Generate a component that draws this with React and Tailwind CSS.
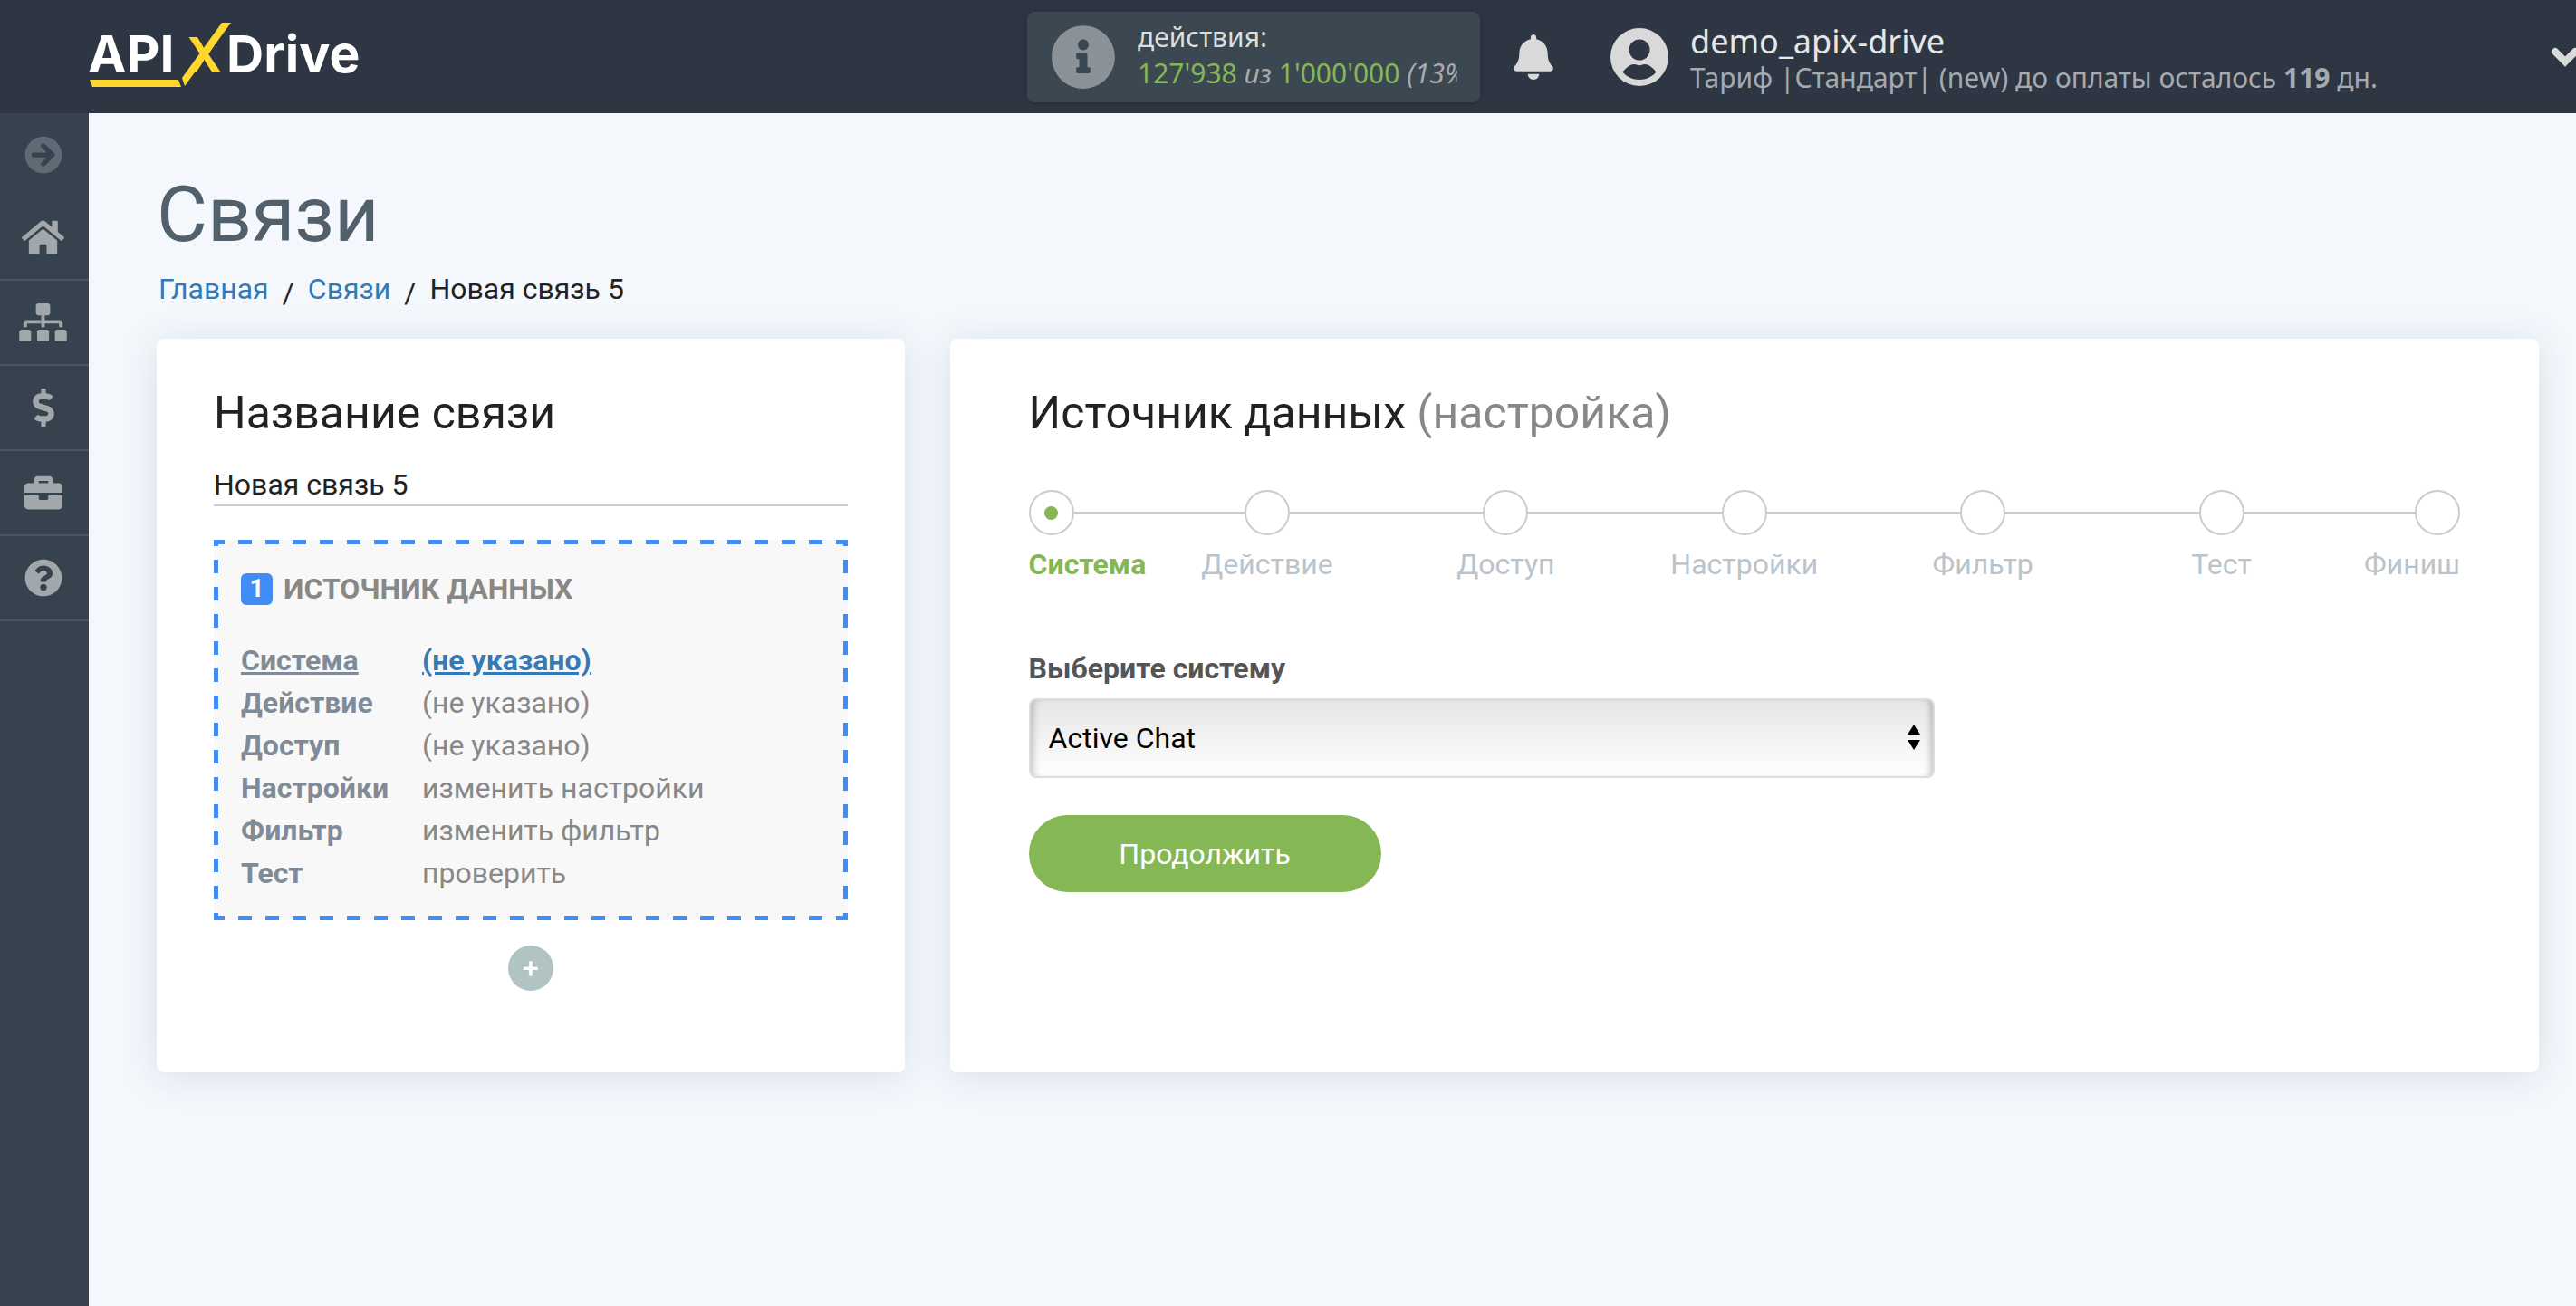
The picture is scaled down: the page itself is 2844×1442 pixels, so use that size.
import {
  FaArrowCircleRight,
  FaBell,
  FaBriefcase,
  FaDollarSign,
  FaHome,
  FaInfoCircle,
  FaQuestionCircle,
  FaSitemap,
} from 'react-icons/fa'

const NAV_ITEMS = [
  { label: 'Главная', icon: FaHome, size: 'h-[42px] w-[47px]' },
  { label: 'Связи', icon: FaSitemap, size: 'h-[42px] w-[53px]' },
  { label: 'Оплата', icon: FaDollarSign, size: 'size-[42px]' },
  { label: 'Проекты', icon: FaBriefcase, size: 'size-[42px]' },
  { label: 'Помощь', icon: FaQuestionCircle, size: 'size-[42px]' },
]

const SOURCE_ROWS = [
  { label: 'Система', value: '(не указано)', active: true },
  { label: 'Действие', value: '(не указано)' },
  { label: 'Доступ', value: '(не указано)' },
  { label: 'Настройки', value: 'изменить настройки' },
  { label: 'Фильтр', value: 'изменить фильтр' },
  { label: 'Тест', value: 'проверить' },
]

const STEPS = ['Система', 'Действие', 'Доступ', 'Настройки', 'Фильтр', 'Тест', 'Финиш']

export default function App() {
  return (
    <div className="flex min-h-screen flex-col bg-[#f4f8fd] font-[Roboto,sans-serif] text-[32px] leading-[48px] text-[#222]">
      <Header />
      <div className="flex flex-1">
        <Sidebar />
        <main className="min-w-0 flex-1 pt-16 pr-[41px] pl-[75px]">
          <h1 className="text-[86px] leading-[96px] text-[#51606b]">Связи</h1>
          <Breadcrumbs />
          <div className="mt-[27px] grid grid-cols-[8fr_17fr] gap-[50px]">
            <ConnectionCard />
            <SourceCard />
          </div>
        </main>
      </div>
    </div>
  )
}

function Header() {
  return (
    <header className="flex h-[125px] items-center overflow-hidden bg-[#2d3642] font-['Noto_Sans',sans-serif] text-[30px]">
      <a href="#" aria-label="ApiX-Drive" className="ml-[98px] shrink-0">
        <Logo />
      </a>

      <div className="ml-auto flex h-[100px] w-[500px] shrink-0 items-center rounded-lg bg-[#3b4851] pr-[25px] pl-[26px] shadow-[0_0_6px_rgba(0,0,0,0.2)]">
        <FaInfoCircle className="size-[72px] shrink-0 text-[#8a9197]" />
        <div className="ml-6 overflow-hidden pb-1 leading-10 whitespace-nowrap">
          <p className="text-[#ddd]">действия:</p>
          <p className="text-[#85b755]">
            127'938 <i className="text-[#aaa]">из</i> 1'000'000 <i className="text-[#aaa]">(13%)</i>
          </p>
        </div>
      </div>

      <button type="button" aria-label="Уведомления" className="ml-[34px] shrink-0">
        <FaBell className="size-[50px] text-[#d9d9d9]" />
      </button>

      <UserIcon />
      <div className="ml-6 w-[950px] shrink-0 pt-1.5 whitespace-nowrap">
        <p className="text-[36px] leading-10 text-[#e6e6e6]">demo_apix-drive</p>
        <p className="leading-10 text-[#a5aaaf]">
          Тариф |Стандарт| (new) до оплаты осталось <b>119</b> дн.
        </p>
      </div>
      <button type="button" aria-label="Меню" className="-mr-1 shrink-0">
        <svg viewBox="0 0 32 22" className="h-[22px] w-8" aria-hidden="true">
          <path d="M5 5l11 11L27 5" fill="none" stroke="#d9d9d9" strokeWidth="8" strokeLinecap="round" />
        </svg>
      </button>
    </header>
  )
}

function UserIcon() {
  return (
    <svg viewBox="0 0 64 64" className="ml-[60px] size-16 shrink-0" aria-hidden="true">
      <circle cx="32" cy="32" r="32" fill="#d9d9d9" />
      <g fill="#2d3642">
        <circle cx="32" cy="24" r="11.5" />
        <path d="M13.5 48.500C18 43 22 40 26 40c2.500 0 3.500 1.200 6 1.200S35.500 40 38 40c4 0 8 3 12.500 8.500C46 54 39.500 57 32 57s-14-3-18.500-8.500z" />
      </g>
    </svg>
  )
}

function Logo() {
  return (
    <svg width="308" height="80" viewBox="98 22 308 80" className="font-[Inter,sans-serif] font-bold" aria-hidden="true">
      <g fontSize="57" fill="#fff">
        <text x="97" y="79">API</text>
        <text x="250" y="79">Drive</text>
      </g>
      <text x="206" y="79" fontSize="53" fill="#ffd72e">X</text>
      <path d="M245 24h10l-51 70-3-9z" fill="#ffd72e" />
      <path d="M99 87h98l3 8h-98z" fill="#ffd72e" />
    </svg>
  )
}

function Sidebar() {
  return (
    <nav className="w-[98px] shrink-0 bg-[#37424f] text-[#a2a7ab]">
      <button type="button" aria-label="Развернуть меню" className="flex h-[91px] w-full items-center justify-center pr-0.5">
        <FaArrowCircleRight className="size-[42px] text-[#616974]" />
      </button>
      {NAV_ITEMS.map(({ label, icon: Icon, size }) => (
        <a
          key={label}
          href="#"
          aria-label={label}
          className="flex h-[94px] items-center justify-center border-b-2 border-[#4a5663] pr-[3px]"
        >
          <Icon className={size} />
        </a>
      ))}
    </nav>
  )
}

function Breadcrumbs() {
  return (
    <nav className="mt-2.5 flex gap-[15px] pl-0.5">
      <a href="#" className="text-[#337ab7]">Главная</a>
      <span className="pt-1">/</span>
      <a href="#" className="text-[#337ab7]">Связи</a>
      <span className="pt-1">/</span>
      <span>Новая связь 5</span>
    </nav>
  )
}

function Card({ children, className }) {
  return (
    <section className={`min-h-[810px] rounded-lg bg-white pt-[50px] shadow-[0_4px_40px_rgba(60,75,95,0.14)] ${className}`}>
      {children}
    </section>
  )
}

function ConnectionCard() {
  return (
    <Card className="px-[63px]">
      <h2 className="text-[50px] leading-[64px]">
        <label htmlFor="connection-name">Название связи</label>
      </h2>
      <input
        id="connection-name"
        type="text"
        defaultValue="Новая связь 5"
        className="mt-6 block h-[47px] w-full border-b-2 border-[#ccc] bg-transparent outline-none"
      />

      <DashedBox>
        <h3 className="flex items-center gap-3 font-bold text-[#888]">
          <span className="flex size-[35px] items-center justify-center rounded-md bg-[#428df5] text-[28px] text-white">1</span>
          ИСТОЧНИК ДАННЫХ
        </h3>
        <table className="mt-8 w-full">
          <tbody>
            {SOURCE_ROWS.map(({ label, value, active }) => (
              <tr key={label} className="leading-[47px]">
                <th className={`w-[200px] text-left font-bold text-[#808b98] ${active ? 'underline' : ''}`}>{label}</th>
                <td className="text-[#888]">
                  {active ? (
                    <a href="#" className="font-bold text-[#337ab7] underline">{value}</a>
                  ) : (
                    value
                  )}
                </td>
              </tr>
            ))}
          </tbody>
        </table>
      </DashedBox>

      <button
        type="button"
        aria-label="Добавить"
        className="mx-auto mt-7 flex size-[50px] items-center justify-center rounded-full bg-[#b2c3c4] font-medium text-white"
      >
        +
      </button>
    </Card>
  )
}

// native dashed borders are too dense here, so each edge is a repeated gradient
function DashedBox({ children }) {
  return (
    <div className="mt-[37px] bg-[#f8f8f8] bg-[image:linear-gradient(to_right,#428df5_50%,transparent_50%),linear-gradient(to_right,#428df5_50%,transparent_50%),linear-gradient(#428df5_50%,transparent_50%),linear-gradient(#428df5_50%,transparent_50%)] bg-[length:30px_5px,30px_5px,5px_30px,5px_30px] bg-[position:-3px_0,-3px_100%,0_-8px,100%_-8px] [background-repeat:repeat-x,repeat-x,repeat-y,repeat-y] px-[30px] pt-[30px] pb-7">
      {children}
    </div>
  )
}

function SourceCard() {
  return (
    <Card className="px-[87px]">
      <h2 className="text-[50px] leading-[64px]">
        Источник данных <span className="text-[#888]">(настройка)</span>
      </h2>
      <Stepper />

      <label htmlFor="system" className="mt-[67px] block font-bold text-[#555]">
        Выберите систему
      </label>
      <div className="relative mt-[9px] max-w-[1000px]">
        <select
          id="system"
          className="h-[88px] w-full appearance-none rounded-lg border-2 border-[#ddd] bg-linear-to-b from-[#e6e6e6] to-white px-5 text-black shadow-[inset_8px_0_8px_-6px_rgba(0,0,0,0.25),inset_-8px_0_8px_-6px_rgba(0,0,0,0.25)]"
        >
          <option>Active Chat</option>
        </select>
        <svg viewBox="0 0 14 28" className="pointer-events-none absolute top-[29px] right-4 h-7 w-3.5" aria-hidden="true">
          <path d="M7 0l7 11H0zM7 28l7-11H0z" />
        </svg>
      </div>
      <button type="button" className="mt-[41px] h-[85px] w-[389px] rounded-full bg-[#85b755] text-white">
        Продолжить
      </button>
    </Card>
  )
}

function Stepper() {
  return (
    <ol className="mt-[53px] grid grid-cols-[minmax(0,1fr)_repeat(5,minmax(0,2fr))_minmax(0,1fr)]">
      {STEPS.map((step, i) => {
        const first = i === 0
        const last = i === STEPS.length - 1
        return (
          <li
            key={step}
            className={`flex flex-col ${first ? 'items-start font-bold text-[#85b755]' : last ? 'items-end text-[#bbc3cb]' : 'items-center text-[#bbc3cb]'}`}
          >
            <div className="flex w-full items-center">
              {!first && <span className="h-0.5 flex-1 bg-[#ccc]" />}
              <span className="flex size-[50px] items-center justify-center rounded-full border-2 border-[#ccc]">
                {first && <span className="size-[15px] rounded-full bg-[#85b755]" />}
              </span>
              {!last && <span className="h-0.5 flex-1 bg-[#ccc]" />}
            </div>
            <span className="mt-2">{step}</span>
          </li>
        )
      })}
    </ol>
  )
}
